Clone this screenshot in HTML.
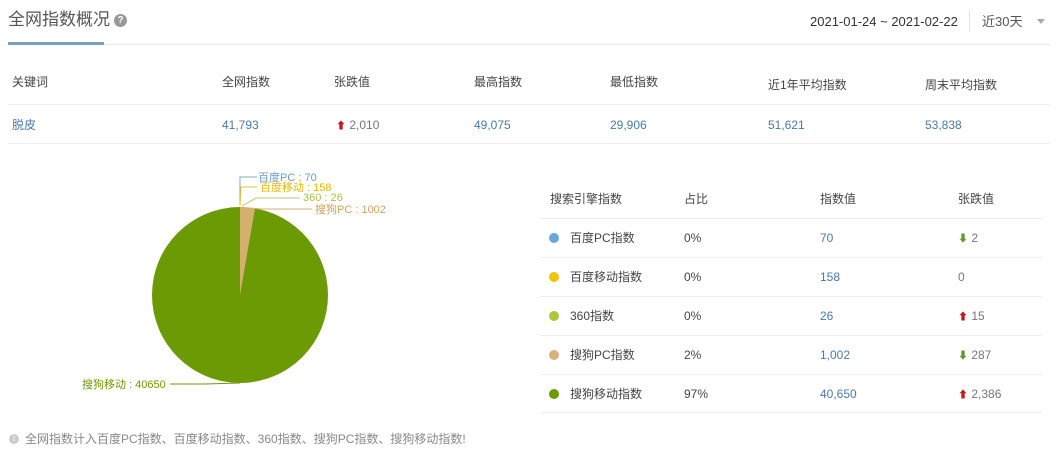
<!DOCTYPE html>
<html><head><meta charset="utf-8"><style>
*{margin:0;padding:0;box-sizing:border-box}
body{width:1059px;height:458px;background:#fff;font-family:"Liberation Sans","Noto Sans CJK SC",sans-serif;font-size:12px;color:#444;position:relative;overflow:hidden}
.a{position:absolute;white-space:nowrap;line-height:14px;height:14px}
.a span{vertical-align:top;position:relative;top:2px}
.hl{position:absolute;height:1px;background:#eceff2}
.b{color:#4a7aa8}
.g{color:#777}
.dot{position:absolute;width:10px;height:10px;border-radius:50%}
.up{color:#c8161d;font-size:10px}
.dn{color:#5b9a2f;font-size:10px}
</style></head><body>
<div class="a" style="left:8px;top:10px;font-size:17px;line-height:20px;height:20px;color:#555">全网指数概况</div>
<div class="a" style="left:114px;top:14px;width:13px;height:13px;border-radius:50%;background:#999;color:#fff;font-size:10px;text-align:center;line-height:13px;font-weight:bold">?</div>
<div class="hl" style="left:8px;top:44px;width:1042px;background:#e6e9ec"></div>
<div class="a" style="left:8px;top:42px;width:96px;height:3px;background:#7a9fc0"></div>
<div class="a" style="left:810px;top:14px;font-size:13px;line-height:16px;height:16px;color:#333">2021-01-24 ~ 2021-02-22</div>
<div class="a" style="left:969px;top:10px;width:1px;height:22px;background:#e3e3e3"></div>
<div class="a" style="left:982px;top:14px;font-size:13px;line-height:16px;height:16px;color:#555">近30天</div>
<div class="a" style="left:1037px;top:19px;width:0;height:0;border-left:4px solid transparent;border-right:4px solid transparent;border-top:5px solid #aaa"></div>

<div class="a" style="left:12px;top:75px">关键词</div>
<div class="a" style="left:222px;top:75px">全网指数</div>
<div class="a" style="left:334px;top:75px">张跌值</div>
<div class="a" style="left:474px;top:75px">最高指数</div>
<div class="a" style="left:610px;top:75px">最低指数</div>
<div class="a" style="left:768px;top:78px">近1年平均指数</div>
<div class="a" style="left:925px;top:78px">周末平均指数</div>
<div class="hl" style="left:8px;top:104px;width:1042px"></div>
<div class="a b" style="left:12px;top:118px">脱皮</div>
<div class="a b" style="left:222px;top:118px">41,793</div>
<div class="a g" style="left:346px;top:118px"><span class="up" style="margin-left:-10px">⬆</span> 2,010</div>
<div class="a b" style="left:474px;top:118px">49,075</div>
<div class="a b" style="left:610px;top:118px">29,906</div>
<div class="a b" style="left:768px;top:118px">51,621</div>
<div class="a b" style="left:925px;top:118px">53,838</div>
<div class="hl" style="left:8px;top:143px;width:1042px"></div>

<svg class="a" style="left:0;top:160px;height:240px" width="530" height="240" viewBox="0 160 530 240">
<circle cx="240" cy="295" r="88" fill="#6b9a05"/>
<path d="M240 295 L240 207 A88 88 0 0 1 255 208.3 Z" fill="#d4b06f"/>
<g fill="none" stroke-width="1">
<polyline points="240,205 240,177 257,177" stroke="#8ab"/>
<polyline points="240,206 241,187 257,187" stroke="#e6c330"/>
<polyline points="242,206 256,198 300,198" stroke="#b5c96a"/>
<polyline points="249,208 262,209 312,209" stroke="#d4b06f"/>
<polyline points="240,383 205,384 170,384" stroke="#6b9a05"/>
</g>
<g font-size="11">
<text x="258" y="181" fill="#6a9bc8">百度PC : 70</text>
<text x="260" y="191" fill="#e6b800">百度移动 : 158</text>
<text x="303" y="201" fill="#a8c24a">360 : 26</text>
<text x="315" y="213" fill="#d4a060">搜狗PC : 1002</text>
<text x="82" y="388" fill="#6b9a05">搜狗移动 : 40650</text>
</g>
</svg>

<div class="a" style="left:550px;top:192px">搜索引擎指数</div>
<div class="a" style="left:684px;top:192px">占比</div>
<div class="a" style="left:820px;top:192px">指数值</div>
<div class="a" style="left:958px;top:192px">张跌值</div>
<div class="hl" style="left:540px;top:218px;width:502px"></div>

<div class="dot" style="left:549px;top:233px;background:#6aa6dc"></div>
<div class="a" style="left:570px;top:231px">百度PC指数</div><div class="a" style="left:684px;top:231px">0%</div><div class="a b" style="left:820px;top:231px">70</div><div class="a g" style="left:958px;top:231px"><span class="dn">⬇</span> 2</div>
<div class="hl" style="left:540px;top:257px;width:502px"></div>
<div class="dot" style="left:549px;top:272px;background:#f0c400"></div>
<div class="a" style="left:570px;top:270px">百度移动指数</div><div class="a" style="left:684px;top:270px">0%</div><div class="a b" style="left:820px;top:270px">158</div><div class="a g" style="left:958px;top:270px">0</div>
<div class="hl" style="left:540px;top:296px;width:502px"></div>
<div class="dot" style="left:549px;top:311px;background:#a9c83a"></div>
<div class="a" style="left:570px;top:309px">360指数</div><div class="a" style="left:684px;top:309px">0%</div><div class="a b" style="left:820px;top:309px">26</div><div class="a g" style="left:958px;top:309px"><span class="up">⬆</span> 15</div>
<div class="hl" style="left:540px;top:335px;width:502px"></div>
<div class="dot" style="left:549px;top:350px;background:#d7b37a"></div>
<div class="a" style="left:570px;top:348px">搜狗PC指数</div><div class="a" style="left:684px;top:348px">2%</div><div class="a b" style="left:820px;top:348px">1,002</div><div class="a g" style="left:958px;top:348px"><span class="dn">⬇</span> 287</div>
<div class="hl" style="left:540px;top:374px;width:502px"></div>
<div class="dot" style="left:549px;top:389px;background:#6b9a05"></div>
<div class="a" style="left:570px;top:387px">搜狗移动指数</div><div class="a" style="left:684px;top:387px">97%</div><div class="a b" style="left:820px;top:387px">40,650</div><div class="a g" style="left:958px;top:387px"><span class="up">⬆</span> 2,386</div>
<div class="hl" style="left:540px;top:412px;width:502px"></div>

<div class="a" style="left:9px;top:434px;width:10px;height:10px;border-radius:50%;background:#ccc;color:#fff;font-size:8px;text-align:center;line-height:10px">i</div>
<div class="a" style="left:25px;top:432px;color:#888">全网指数计入百度PC指数、百度移动指数、360指数、搜狗PC指数、搜狗移动指数!</div>
</body></html>
